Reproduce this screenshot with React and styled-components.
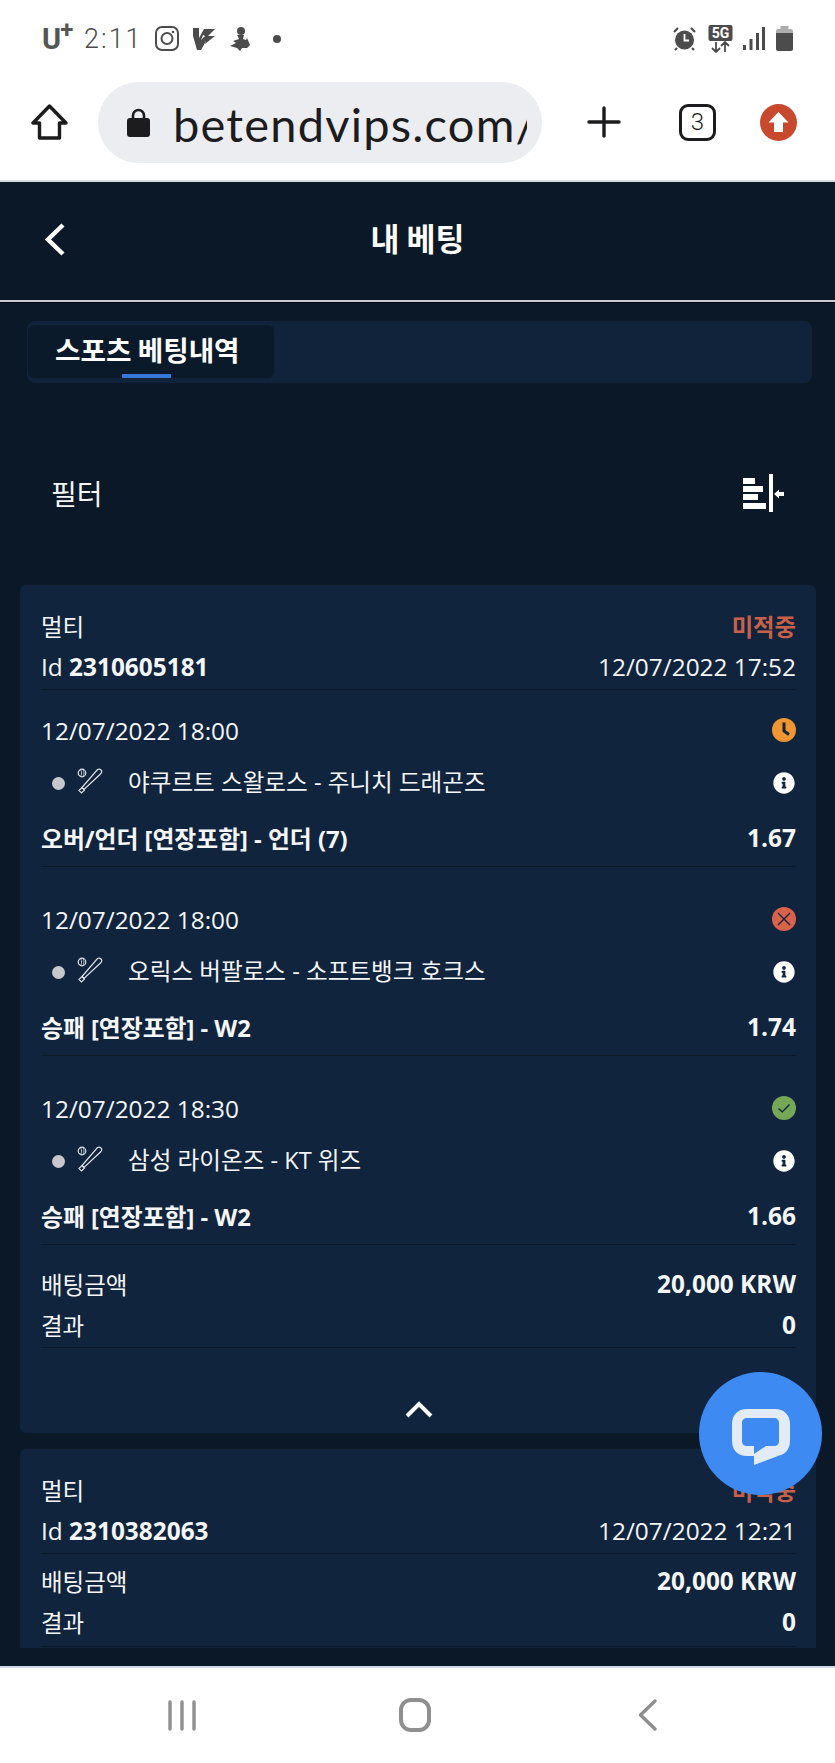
import React from "react";
import styled, { createGlobalStyle } from "styled-components";
import { FaInfoCircle } from "react-icons/fa";

const Global = createGlobalStyle`
  html, body { margin: 0; padding: 0; background: #fff; }
  * { box-sizing: border-box; }
`;

const Screen = styled.div`
  position: relative;
  width: 835px;
  height: 1763px;
  overflow: hidden;
  display: flex;
  flex-direction: column;
  background: #fff;
  font-family: "Open Sans", "Noto Sans CJK KR", sans-serif;
`;

const StatusBar = styled.div`
  height: 72px;
  display: flex;
  align-items: center;
  justify-content: space-between;
  padding: 6px 42px 0 42px;
  color: #4c4c4c;
`;
const StatusGroup = styled.div`
  display: flex;
  align-items: center;
`;
const Carrier = styled.span`
  font-family: "Roboto", sans-serif;
  font-size: 29px;
  font-weight: 700;
  line-height: 30px;
  width: 30px;
  color: #555;
  display: flex;
  letter-spacing: -1px;
  sup { font-size: 24px; line-height: 18px; margin-top: -3px; vertical-align: top; }
`;
const Clock = styled.span`
  font-family: "Roboto", sans-serif;
  font-weight: 300;
  font-size: 27px;
  line-height: 30px;
  letter-spacing: 2px;
  margin-left: 12px;
  width: 53px;
  white-space: nowrap;
  color: #4c4c4c;
`;
const StatusGlyph = styled.svg`
  display: block;
  margin-left: ${(p) => p.$ml || 0}px;
  flex: none;
`;

const Toolbar = styled.div`
  height: 110px;
  display: flex;
  align-items: center;
  padding: 10px 0 17px 31px;
  border-bottom: 2px solid #d8dcdf;
`;
const ToolGlyph = styled.svg`
  display: block;
  flex: none;
  margin-left: ${(p) => p.$ml || 0}px;
`;
const UrlPill = styled.div`
  width: 444px;
  height: 81px;
  margin-left: 30px;
  border-radius: 41px;
  background: #ebedf0;
  display: flex;
  align-items: center;
  padding: 0 15px 0 29px;
  flex: none;
`;
const UrlClip = styled.div`
  margin-left: 23px;
  width: 354px;
  padding-top: 4px;
  overflow: hidden;
`;
const UrlText = styled.span`
  display: block;
  font-family: "Lato", sans-serif;
  font-size: 47px;
  line-height: 64px;
  letter-spacing: 1.2px;
  color: #1c1c1e;
  white-space: nowrap;
`;
const TabCount = styled.div`
  width: 37px;
  height: 37px;
  margin-left: 58px;
  border: 3px solid #1c1c1e;
  border-radius: 9px;
  display: flex;
  align-items: center;
  justify-content: center;
  font-family: "Roboto", sans-serif;
  font-size: 24px;
  font-weight: 300;
  color: #1c1c1e;
  flex: none;
`;

const Main = styled.main`
  flex: 1;
  background: #0a1828;
  display: flex;
  flex-direction: column;
  color: #f4f6f8;
`;
const PageHeader = styled.header`
  height: 120px;
  padding-bottom: 7px;
  display: flex;
  align-items: center;
  justify-content: center;
  position: relative;
  border-bottom: 2px solid #c9cccf;
  box-shadow: 0 1px 0 #02060c;
`;
const BackButton = styled.svg`
  position: absolute;
  left: 45px;
  top: 41px;
`;
const PageTitle = styled.h1`
  margin: 0;
  font-family: "Noto Sans CJK KR", sans-serif;
  font-size: 31.5px;
  font-weight: 700;
  line-height: 40px;
  color: #fff;
`;
const TabStrip = styled.div`
  margin: 19px 23px 0 27px;
  height: 62px;
  padding: 4px 1px 5px;
  background: #10233a;
  border-radius: 8px;
`;
const ActiveTab = styled.div`
  position: relative;
  width: 246px;
  height: 53px;
  border-radius: 6px;
  background: #0b1a2b;
  display: flex;
  align-items: center;
  padding: 0 0 5px 27px;
  font-family: "Noto Sans CJK KR", sans-serif;
  font-size: 27.7px;
  font-weight: 700;
  color: #fff;
  white-space: nowrap;
  &::after {
    content: "";
    position: absolute;
    left: 94px;
    bottom: 0;
    width: 49px;
    height: 4px;
    background: #3578d8;
  }
`;
const FilterRow = styled.div`
  height: 202px;
  padding: 22px 49px 0 51px;
  display: flex;
  align-items: center;
  justify-content: space-between;
`;
const FilterLabel = styled.span`
  font-size: 28px;
  line-height: 36px;
  margin-bottom: 1px;
  color: #f4f6f8;
`;
const FilterGlyph = styled.svg`
  display: block;
  margin-bottom: 4px;
`;

const Card = styled.section`
  margin: ${(p) => p.$top || 0}px 19px 0 20px;
  background: #10243d;
  border-radius: ${(p) => (p.$clipped ? "6px 6px 0 0" : "6px")};
  padding: 22px 20px ${(p) => (p.$clipped ? 1 : 0)}px 21px;
`;
const Row = styled.div`
  height: 41px;
  padding-bottom: 3px;
  display: flex;
  align-items: center;
  justify-content: space-between;
  font-size: 24.4px;
  white-space: nowrap;
`;
const Label = styled.span`
  font-size: 23.5px;
`;
const Lost = styled.span`
  font-family: "Noto Sans CJK KR", sans-serif;
  font-weight: 700;
  font-size: 23.3px;
  color: #c9604a;
`;
const Strong = styled.b`
  font-weight: 700;
`;
const Block = styled.div`
  border-bottom: 1px solid #0a1828;
`;
const Leg = styled.div`
  margin-bottom: 12px;
  padding-top: 20px;
  border-bottom: 1px solid #0a1828;
`;
const DateRow = styled(Row)`
  height: 44px;
`;
const TeamRow = styled(Row)`
  height: 58px;
`;
const Teams = styled.div`
  display: flex;
  align-items: center;
  font-size: 23.6px;
  padding-left: 11px;
`;
const Dot = styled.span`
  width: 13px;
  height: 13px;
  margin-top: 4px;
  border-radius: 50%;
  background: #c8c8cc;
  margin-right: 12px;
`;
const TeamNames = styled.span`
  margin-left: 25px;
  font-weight: 400;
`;
const MarketRow = styled(Row)`
  height: 54px;
  font-weight: 700;
  font-size: 23.8px;
`;
const Odds = styled.span`
  font-size: 24.5px;
`;
const InfoButton = styled(FaInfoCircle)`
  display: block;
  color: #fff;
  font-size: 22px;
  margin: 3px 1px 0 0;
`;
const Summary = styled.div`
  padding: 8px 0 ${(p) => p.$tail || 0}px;
  border-bottom: 1px solid #0a1828;
`;
const Collapse = styled.div`
  height: 85px;
  display: flex;
  justify-content: center;
  padding-top: 53px;
`;
const ChatFab = styled.button`
  position: absolute;
  right: 13px;
  bottom: 268px;
  width: 123px;
  height: 123px;
  border: 0;
  padding: 6px 0 0;
  border-radius: 50%;
  background: #3d8bf2;
  display: flex;
  align-items: center;
  justify-content: center;
`;
const BottomSpace = styled.div`
  height: 18px;
`;

const NavBar = styled.nav`
  height: 98px;
  border-top: 2px solid #cfd9e6;
  display: grid;
  grid-template-columns: repeat(3, 233px);
  justify-items: center;
  align-items: center;
  padding: 0 0 0 65px;
  background: #fff;
`;

const Status = ({ kind }) => {
  if (kind === "clock")
    return (
      <svg width="24" height="24" viewBox="0 0 24 24">
        <circle cx="12" cy="12" r="12" fill="#f0952f" />
        <path d="M12 4.5V13l5 3.5" fill="none" stroke="#10243d" strokeWidth="3" />
      </svg>
    );
  if (kind === "lost")
    return (
      <svg width="24" height="24" viewBox="0 0 24 24">
        <circle cx="12" cy="12" r="12" fill="#d8624a" />
        <path d="M6 6l12 12M18 6L6 18" fill="none" stroke="#10243d" strokeWidth="1.4" />
      </svg>
    );
  return (
    <svg width="24" height="24" viewBox="0 0 24 24">
      <circle cx="12" cy="12" r="12" fill="#74a857" />
      <path d="M6.5 12.5l3.8 3.4 7.2-7.4" fill="none" stroke="#10243d" strokeWidth="1.4" />
    </svg>
  );
};

const Bat = () => (
  <svg width="26" height="26" viewBox="0 0 26 26" fill="none" stroke="#dfe3e8" strokeWidth="1.2">
    <circle cx="5" cy="5" r="3.8" />
    <path d="M3.800 1.800c1 2 1 4.400 0 6.400M6.200 1.800c1 2 1 4.400 0 6.400" strokeWidth="0.8" />
    <path d="M20.500 1.500Q22.500 0.500 24 2Q25.500 3.500 24 5.500L7 21.500L5 19.500Z" />
    <path d="M2 22.500L5 19.500L7.500 22L4.500 25Z" />
  </svg>
);

const LegBlock = ({ date, status, teams, market, odds }) => (
  <Leg>
    <DateRow>
      <span>{date}</span>
      <Status kind={status} />
    </DateRow>
    <TeamRow>
      <Teams>
        <Dot />
        <Bat />
        <TeamNames>{teams}</TeamNames>
      </Teams>
      <InfoButton />
    </TeamRow>
    <MarketRow>
      <span>{market}</span>
      <Odds>{odds}</Odds>
    </MarketRow>
  </Leg>
);

const CardHead = ({ id, date }) => (
  <Block>
    <Row>
      <Label>멀티</Label>
      <Lost>미적중</Lost>
    </Row>
    <Row>
      <span>
        Id <Strong>{id}</Strong>
      </span>
      <span>{date}</span>
    </Row>
  </Block>
);

const Totals = ({ tail }) => (
  <Summary $tail={tail}>
    <Row>
      <Label>배팅금액</Label>
      <Strong>20,000 KRW</Strong>
    </Row>
    <Row>
      <Label>결과</Label>
      <Strong>0</Strong>
    </Row>
  </Summary>
);

export default function App() {
  return (
    <Screen>
      <Global />
      <StatusBar>
        <StatusGroup>
          <Carrier>
            U<sup>+</sup>
          </Carrier>
          <Clock>2:11</Clock>
          <StatusGlyph $ml={18} width="24" height="25" viewBox="0 0 24 25" fill="none" stroke="#4c4c4c">
            <rect x="1" y="1" width="22" height="23" rx="6" strokeWidth="2" />
            <circle cx="12" cy="12.5" r="5.5" strokeWidth="2" />
            <circle cx="18" cy="6" r="1.3" fill="#4c4c4c" stroke="none" />
          </StatusGlyph>
          <StatusGlyph $ml={14} width="23" height="22" viewBox="0 0 23 22" fill="#4c4c4c">
            <path d="M0 0h6v10L11 1h11l-7 7h7L12 16l1-3-5 9H4L0 8z" />
            <path d="M10 7l-2 5 4-4z" fill="#fff" />
          </StatusGlyph>
          <StatusGlyph $ml={14} width="21" height="24" viewBox="0 0 21 24" fill="#4c4c4c">
            <circle cx="11" cy="4" r="4" />
            <path d="M7 8h7l-1 4 3 1 1-2 3 7-3 3h-5l-2 3-3-3-7-2 6-3-3-2 6-2z" />
          </StatusGlyph>
          <StatusGlyph $ml={22} width="8" height="8" viewBox="0 0 8 8" fill="#4c4c4c">
            <circle cx="4" cy="4" r="4" />
          </StatusGlyph>
        </StatusGroup>
        <StatusGroup>
          <StatusGlyph width="23" height="24" viewBox="0 0 23 24">
            <circle cx="11.5" cy="13" r="9.500" fill="#4c4c4c" />
            <path d="M11.500 7v6.500H16" fill="none" stroke="#fff" strokeWidth="1.8" />
            <path d="M1 5l4-4M22 5l-4-4M4 21l-2 2M19 21l2 2" stroke="#4c4c4c" strokeWidth="2.2" />
          </StatusGlyph>
          <StatusGlyph $ml={12} width="25" height="28" viewBox="0 0 25 28">
            <rect x="0.5" y="0" width="24" height="16" rx="2" fill="#4c4c4c" />
            <text x="12.5" y="13" textAnchor="middle" fontFamily="Roboto, sans-serif" fontWeight="700" fontSize="14" fill="#fff">
              5G
            </text>
            <path d="M8 17v10M4 23l4 4 4-4M17 27V17M13 21l4-4 4 4" fill="none" stroke="#4c4c4c" strokeWidth="1.8" />
          </StatusGlyph>
          <StatusGlyph $ml={10} width="22" height="23" viewBox="0 0 22 23" fill="#4c4c4c">
            <rect x="0" y="18" width="3" height="5" />
            <rect x="6.5" y="12" width="3" height="11" />
            <rect x="13" y="6" width="3" height="17" />
            <rect x="19" y="0" width="3" height="23" />
          </StatusGlyph>
          <StatusGlyph $ml={11} width="17" height="25" viewBox="0 0 17 25">
            <path d="M4.500 0h8v3h2.500a2 2 0 0 1 2 2v2H0V5a2 2 0 0 1 2-2h2.500z" fill="#adadad" />
            <path d="M0 7h17v16a2 2 0 0 1-2 2H2a2 2 0 0 1-2-2z" fill="#4c4c4c" />
          </StatusGlyph>
        </StatusGroup>
      </StatusBar>

      <Toolbar>
        <ToolGlyph width="37" height="36" viewBox="0 0 37 36" fill="none" stroke="#1c1c1e" strokeWidth="3.4" strokeLinejoin="round">
          <path d="M18.500 2L2 19h6.500v15h20V19H35z" />
        </ToolGlyph>
        <UrlPill>
          <ToolGlyph width="23" height="29" viewBox="0 0 23 29">
            <path d="M6 12V7.500a5.500 5.500 0 0 1 11 0V12" fill="none" stroke="#1c1c1e" strokeWidth="2.6" />
            <rect x="0" y="10" width="23" height="19" rx="3" fill="#1c1c1e" />
          </ToolGlyph>
          <UrlClip>
            <UrlText>betendvips.com/</UrlText>
          </UrlClip>
        </UrlPill>
        <ToolGlyph $ml={45} width="34" height="32" viewBox="0 0 34 32" stroke="#1c1c1e" strokeWidth="3.4" strokeLinecap="round">
          <path d="M2 16h30M17 2v28" />
        </ToolGlyph>
        <TabCount>3</TabCount>
        <ToolGlyph $ml={44} width="37" height="37" viewBox="0 0 37 37">
          <circle cx="18.500" cy="18.500" r="18.500" fill="#c9492f" />
          <path d="M18.500 8l10 10.500H23V28h-9v-9.500H8.500z" fill="#fff" />
        </ToolGlyph>
      </Toolbar>

      <Main>
        <PageHeader>
          <BackButton width="20" height="33" viewBox="0 0 20 33" fill="none" stroke="#fff" strokeWidth="4.400">
            <path d="M18 2L3 16.500 18 31" />
          </BackButton>
          <PageTitle>내 베팅</PageTitle>
        </PageHeader>
        <TabStrip>
          <ActiveTab>스포츠 베팅내역</ActiveTab>
        </TabStrip>
        <FilterRow>
          <FilterLabel>필터</FilterLabel>
          <FilterGlyph width="43" height="38" viewBox="0 0 43 38" fill="#fff">
            <rect x="0" y="4" width="12" height="6" />
            <rect x="0" y="12" width="20" height="6" />
            <rect x="0" y="20" width="15" height="6" />
            <rect x="0" y="29" width="23" height="6" />
            <rect x="26" y="0" width="4" height="38" />
            <path d="M31 20l5-4.500V18h5v4h-5v2.500z" />
          </FilterGlyph>
        </FilterRow>

        <Card>
          <CardHead id="2310605181" date="12/07/2022 17:52" />
          <LegBlock
            date="12/07/2022 18:00"
            status="clock"
            teams="야쿠르트 스왈로스 - 주니치 드래곤즈"
            market="오버/언더 [연장포함] - 언더 (7)"
            odds="1.67"
          />
          <LegBlock
            date="12/07/2022 18:00"
            status="lost"
            teams="오릭스 버팔로스 - 소프트뱅크 호크스"
            market="승패 [연장포함] - W2"
            odds="1.74"
          />
          <LegBlock
            date="12/07/2022 18:30"
            status="won"
            teams="삼성 라이온즈 - KT 위즈"
            market="승패 [연장포함] - W2"
            odds="1.66"
          />
          <Totals />
          <Collapse>
            <svg width="28" height="17" viewBox="0 0 28 17" fill="none" stroke="#fff" strokeWidth="4">
              <path d="M2 15L14 3l12 12" />
            </svg>
          </Collapse>
        </Card>

        <Card $top={16} $clipped>
          <CardHead id="2310382063" date="12/07/2022 12:21" />
          <Totals tail={2} />
        </Card>
        <BottomSpace />
      </Main>

      <ChatFab aria-label="chat">
        <svg width="58" height="56" viewBox="0 0 58 56">
          <path
            fillRule="evenodd"
            fill="#e3ebf4"
            d="M15 0H43C52 0 58 6 58 15V32C58 41 52 47 43 47H46L22 56V47H15C6 47 0 41 0 32V15C0 6 6 0 15 0ZM15 9C12 9 10 11 10 14V32C10 35 12 37 15 37H22V45L34 37H42C45 37 47 35 47 32V14C47 11 45 9 42 9Z"
          />
        </svg>
      </ChatFab>

      <NavBar>
        <svg width="28" height="31" viewBox="0 0 28 31" stroke="#8f8f8f" strokeWidth="3.400" strokeLinecap="round">
          <path d="M2 2v27M14 2v27M26 2v27" />
        </svg>
        <svg width="32" height="34" viewBox="0 0 32 34" fill="none" stroke="#8f8f8f" strokeWidth="4">
          <rect x="2" y="2" width="28" height="30" rx="10" />
        </svg>
        <svg width="19" height="32" viewBox="0 0 19 32" fill="none" stroke="#8f8f8f" strokeWidth="3.400" strokeLinecap="round" strokeLinejoin="round">
          <path d="M17 2L2.500 16 17 30" />
        </svg>
      </NavBar>
    </Screen>
  );
}
